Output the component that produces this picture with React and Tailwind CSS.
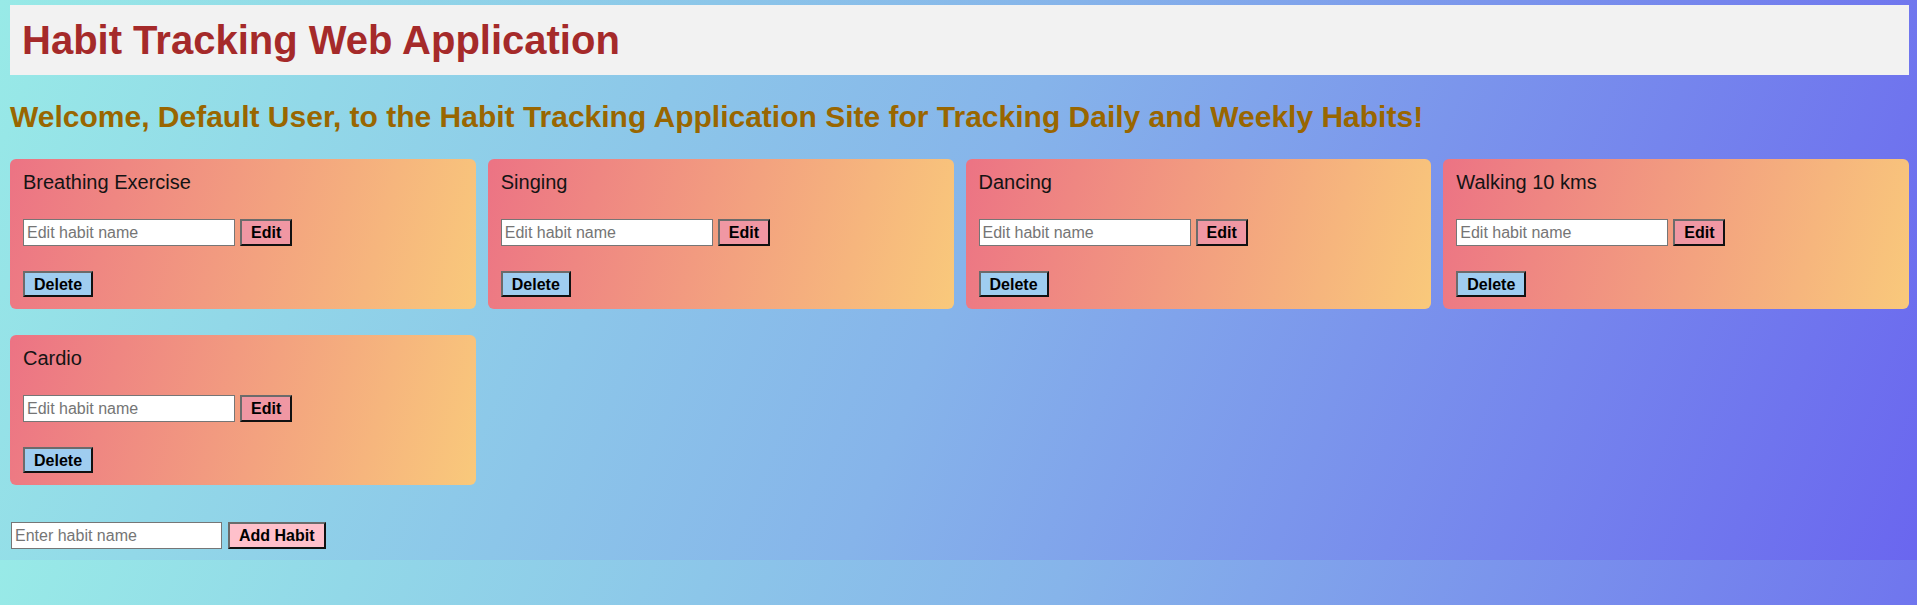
const habits = ["Breathing Exercise", "Singing", "Dancing", "Walking 10 kms", "Cardio"];

const btnBorder =
  "border-2 border-solid border-t-[#6b6b6b] border-l-[#6b6b6b] border-r-[#111] border-b-[#111]";

function HabitCard({ name }) {
  return (
    <div className="flex flex-col items-start rounded-[6px] bg-[linear-gradient(105deg,#ec7384_0%,#f9c97b_100%)] px-[13px] pt-[12px] pb-[12px]">
      <p className="text-[20px] leading-[23px] text-[#141414]">{name}</p>
      <div className="mt-[25px] flex items-center gap-[5px]">
        <input
          type="text"
          placeholder="Edit habit name"
          className="h-[27px] w-[212px] border border-[#767676] bg-white px-[3px] text-[16px] text-black placeholder:text-[#757575] outline-none"
        />
        <button
          type="button"
          className={`h-[27px] bg-[#f097a3] px-[9px] text-[16px] font-bold text-black ${btnBorder}`}
        >
          Edit
        </button>
      </div>
      <button
        type="button"
        className={`mt-[25px] h-[26px] bg-[#9fcdf0] px-[9px] text-[16px] font-bold text-black ${btnBorder}`}
      >
        Delete
      </button>
    </div>
  );
}

export default function App() {
  return (
    <div className="h-screen bg-[linear-gradient(112deg,#98eae7_0%,#86b4ea_50%,#6a66ef_100%)] bg-[length:100%_560px] bg-repeat font-['Liberation_Sans',Arial,sans-serif]">
      <div className="pt-[5px] pr-[8px] pb-[10px] pl-[10px]">
        <header className="bg-[#f2f2f2] px-[12px] py-[12px]">
          <h1 className="text-[40px] leading-[46px] font-bold text-[#a52a2a]">
            Habit Tracking Web Application
          </h1>
        </header>

        <h2 className="my-[25px] text-[30px] leading-[34px] font-bold text-[#996600]">
          Welcome, Default User, to the Habit Tracking Application Site for Tracking Daily and Weekly Habits!
        </h2>

        <div className="grid grid-cols-4 gap-x-[12px] gap-y-[26px]">
          {habits.map((h) => (
            <HabitCard key={h} name={h} />
          ))}
        </div>

        <div className="mt-[37px] flex items-center gap-[6px] pl-[1px]">
          <input
            type="text"
            placeholder="Enter habit name"
            className="h-[27px] w-[211px] border border-[#767676] bg-white px-[3px] text-[16px] text-black placeholder:text-[#757575] outline-none"
          />
          <button
            type="button"
            className={`h-[27px] bg-[#ffc0cb] px-[9px] text-[16px] font-bold text-black ${btnBorder}`}
          >
            Add Habit
          </button>
        </div>
      </div>
    </div>
  );
}
